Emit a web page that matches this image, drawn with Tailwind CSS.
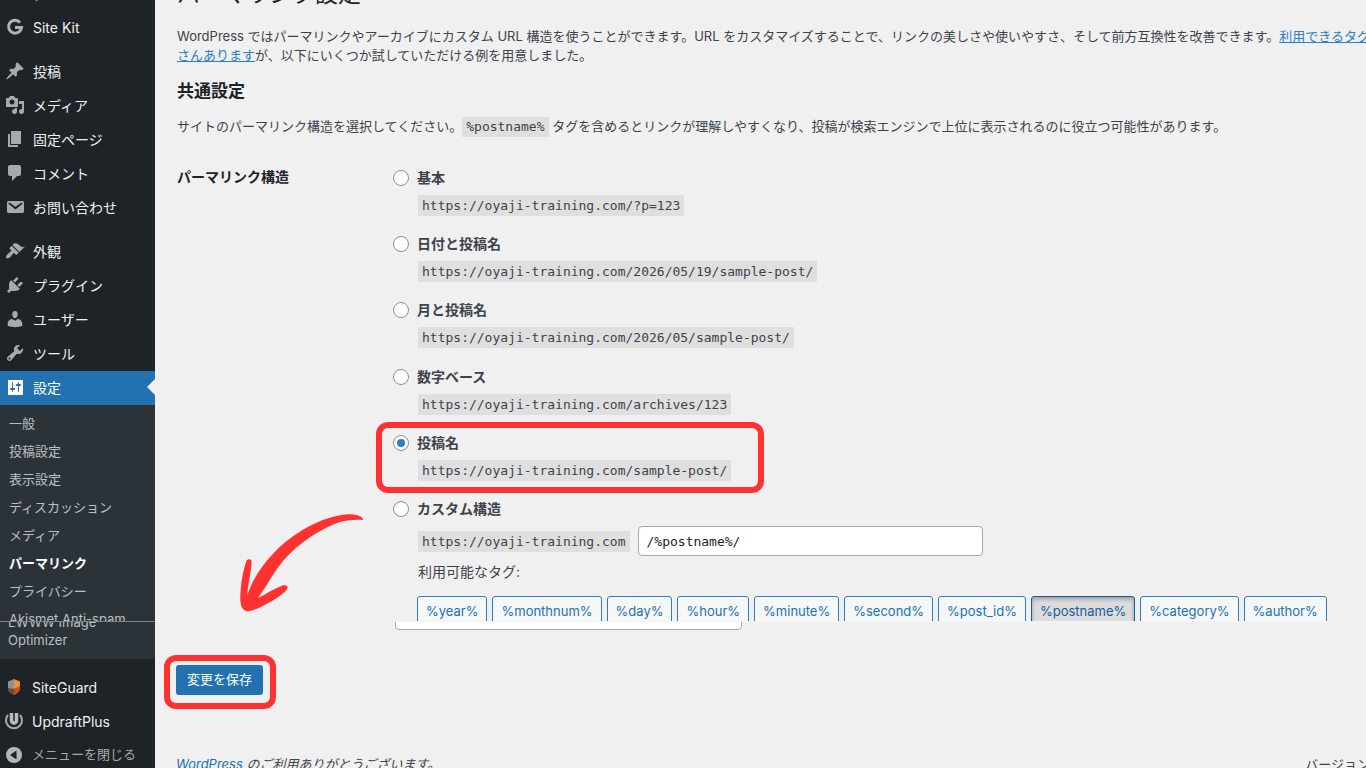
<!DOCTYPE html>
<html lang="ja">
<head>
<meta charset="utf-8">
<meta name="viewport" content="width=device-width, initial-scale=1">
<title>パーマリンク設定</title>
<script src="https://cdn.jsdelivr.net/npm/@tailwindcss/browser@4"></script>
</head>
<body class="flex h-screen flex-col overflow-hidden bg-[#f0f0f0] font-['Inter','Noto_Sans_CJK_JP',sans-serif] text-[13px] text-[#3c434a]">

<!-- Upper pane: menu and permalink options -->
<div class="relative flex min-h-0 flex-1 overflow-hidden">
  <nav class="w-[155px] shrink-0 overflow-hidden bg-[#1d2327] text-[14px] text-[#f0f0f1]" aria-label="メインメニュー">
    <ul class="-mt-[23px]">
      <li><a href="#" class="flex h-[34px] items-center gap-2 pb-[2px] pl-[5px]">
        <svg class="size-5 shrink-0 fill-[#a7aaad]" viewBox="0 0 20 20"><path d="M3.76 17h12.48A8 8 0 1 0 3.76 17zM10 4a1 1 0 1 1 0 2 1 1 0 0 1 0-2z"/></svg>ダッシュボード</a></li>
      <li><a href="#" class="flex h-[34px] items-center gap-2 pb-[2px] pl-[5px]">
        <svg class="size-5 shrink-0" viewBox="0 0 20 20" fill="none" stroke="#b0b3b6" stroke-width="3"><path d="M15 5.4A6.5 6.5 0 1 0 16.5 10.6H10"/></svg>Site Kit</a></li>
      <li class="mt-[10px]"><a href="#" class="flex h-[34px] items-center gap-2 pb-[2px] pl-[5px]">
        <svg class="size-5 shrink-0 fill-[#a7aaad]" viewBox="0 0 20 20"><path d="M10.44 3.02l1.82-1.82 6.36 6.35-1.83 1.82c-1.05-.68-2.48-.57-3.41.36l-.75.75c-.92.93-1.04 2.35-.35 3.41l-1.83 1.82-2.41-2.41-2.8 2.79c-.42.42-3.38 2.71-3.8 2.29s1.86-3.39 2.28-3.81l2.79-2.79L4.1 9.36l1.83-1.82c1.05.69 2.48.57 3.4-.36l.75-.75c.93-.92 1.05-2.35.36-3.41z"/></svg>投稿</a></li>
      <li><a href="#" class="flex h-[34px] items-center gap-2 pb-[2px] pl-[5px]">
        <svg class="size-5 shrink-0 fill-[#a7aaad]" viewBox="0 0 20 20"><path d="M13 11V4c0-.55-.45-1-1-1h-1.67L9 1H5L3.67 3H2c-.55 0-1 .45-1 1v7c0 .55.45 1 1 1h10c.55 0 1-.45 1-1zM7 4.5c1.38 0 2.5 1.12 2.5 2.5S8.38 9.5 7 9.5 4.5 8.38 4.5 7 5.62 4.5 7 4.5zM14 6h5v10.5c0 1.38-1.12 2.5-2.5 2.5S14 17.88 14 16.5s1.12-2.5 2.5-2.5c.17 0 .34.02.5.05V9h-3V6zm-4 8.05V13h2v3.5c0 1.38-1.12 2.5-2.5 2.5S7 17.88 7 16.5 8.12 14 9.5 14c.17 0 .34.02.5.05z"/></svg>メディア</a></li>
      <li><a href="#" class="flex h-[34px] items-center gap-2 pb-[2px] pl-[5px]">
        <svg class="size-5 shrink-0 fill-[#a7aaad]" viewBox="0 0 20 20"><path d="M6 15V2h10v13H6zm-1 1h8v2H3V5h2v11z"/></svg>固定ページ</a></li>
      <li><a href="#" class="flex h-[34px] items-center gap-2 pb-[2px] pl-[5px]">
        <svg class="size-5 shrink-0 fill-[#a7aaad]" viewBox="0 0 20 20"><path d="M5 2h9c1.1 0 2 .9 2 2v7c0 1.1-.9 2-2 2h-2l-5 5v-5H5c-1.1 0-2-.9-2-2V4c0-1.1.9-2 2-2z"/></svg>コメント</a></li>
      <li><a href="#" class="flex h-[34px] items-center gap-2 pb-[2px] pl-[5px]">
        <svg class="size-5 shrink-0 fill-[#a7aaad]" viewBox="0 0 20 20"><path d="M3.87 4h13.25C18.37 4 19 4.59 19 5.79v8.42c0 1.19-.63 1.79-1.88 1.79H3.87c-1.25 0-1.88-.6-1.88-1.79V5.79c0-1.2.63-1.79 1.88-1.79zm6.62 8.6l6.74-5.53c.24-.2.43-.66.13-1.07-.29-.41-.82-.42-1.17-.17l-5.7 3.86L4.8 5.83c-.35-.25-.88-.24-1.17.17-.3.41-.11.87.13 1.07z"/></svg>お問い合わせ</a></li>
      <li class="mt-[10px]"><a href="#" class="flex h-[34px] items-center gap-2 pb-[2px] pl-[5px]">
        <svg class="size-5 shrink-0 fill-[#a7aaad]" viewBox="0 0 20 20"><path d="M14.48 11.06L7.41 3.99l1.5-1.5c.5-.56 2.3-.47 3.51.32 1.21.8 1.43 1.28 2.91 2.1 1.18.64 2.45 1.26 4.45.85zm-.71.71L6.7 4.7 4.93 6.47c-.39.39-.39 1.02 0 1.41l1.06 1.06c.39.39.39 1.03 0 1.42-.6.6-1.43 1.11-2.21 1.69-.35.26-.7.53-1.01.84C1.43 14.23.4 16.08 1.4 17.07c.99 1 2.84-.03 4.18-1.36.31-.31.58-.66.85-1.02.57-.78 1.08-1.61 1.69-2.21.39-.39 1.02-.39 1.41 0l1.06 1.06c.39.39 1.02.39 1.41 0z"/></svg>外観</a></li>
      <li><a href="#" class="flex h-[34px] items-center gap-2 pb-[2px] pl-[5px]">
        <svg class="size-5 shrink-0 fill-[#a7aaad]" viewBox="0 0 20 20"><path d="M13.11 4.36L9.87 7.6 8 5.73l3.24-3.24c.35-.34 1.05-.2 1.56.32.52.51.66 1.21.31 1.55zm-8 1.77l.91-1.12 9.01 9.01-1.19.84c-.71.71-2.63 1.16-3.82 1.16H6.14L4.9 17.26c-.59.59-1.54.59-2.12 0-.59-.58-.59-1.53 0-2.12l1.24-1.24v-3.88c0-1.13.4-3.19 1.09-3.89zm7.26 3.97l3.24-3.24c.34-.35 1.04-.21 1.55.31.52.51.66 1.21.31 1.55l-3.24 3.25z"/></svg>プラグイン</a></li>
      <li><a href="#" class="flex h-[34px] items-center gap-2 pb-[2px] pl-[5px]">
        <svg class="size-5 shrink-0 fill-[#a7aaad]" viewBox="0 0 20 20"><path d="M10 9.25c-2.27 0-2.73-3.44-2.73-3.44C7 4.02 7.82 2 9.97 2c2.16 0 2.98 2.02 2.71 3.81 0 0-.41 3.44-2.68 3.44zm0 2.57L12.72 10c2.39 0 4.52 2.33 4.52 4.53v2.49s-3.65 1.13-7.24 1.13c-3.65 0-7.24-1.13-7.24-1.13v-2.49c0-2.25 1.94-4.48 4.47-4.48z"/></svg>ユーザー</a></li>
      <li><a href="#" class="flex h-[34px] items-center gap-2 pb-[2px] pl-[5px]">
        <svg class="size-5 shrink-0 fill-[#a7aaad]" viewBox="0 0 20 20"><path d="M16.68 9.77c-1.34 1.34-3.3 1.67-4.95.99l-5.41 6.52c-.99.99-2.59.99-3.58 0s-.99-2.59 0-3.57l6.52-5.42c-.68-1.65-.35-3.61.99-4.95 1.28-1.28 3.12-1.62 4.72-1.06l-2.89 2.89 2.82 2.82 2.86-2.87c.53 1.58.18 3.39-1.08 4.65zM3.81 16.21c.4.39 1.04.39 1.43 0 .4-.4.4-1.04 0-1.43-.39-.4-1.03-.4-1.43 0-.39.39-.39 1.03 0 1.43z"/></svg>ツール</a></li>
      <li>
        <a href="#" class="flex h-[34px] items-center gap-2 bg-[#2271b1] pb-[2px] pl-[5px] text-white">
          <svg class="size-5 shrink-0 fill-white" viewBox="0 0 20 20"><path d="M18 16V4c0-.55-.45-1-1-1H4c-.55 0-1 .45-1 1v13c0 .55.45 1 1 1h13c.55 0 1-.45 1-1v-1zM8 11h1c.55 0 1 .45 1 1s-.45 1-1 1H8v1.5c0 .28-.22.5-.5.5s-.5-.22-.5-.5V13H6c-.55 0-1-.45-1-1s.45-1 1-1h1V5.5c0-.28.22-.5.5-.5s.5.22.5.5V11zm5-2h-1c-.55 0-1-.45-1-1s.45-1 1-1h1V5.5c0-.28.22-.5.5-.5s.5.22.5.5V7h1c.55 0 1 .45 1 1s-.45 1-1 1h-1v5.5c0 .28-.22.5-.5.5s-.5-.22-.5-.5V9z"/></svg>
          <span class="flex-1">設定</span>
          <svg class="h-4 w-2 shrink-0 fill-[#f0f0f0]" viewBox="0 0 8 16"><path d="M8 0v16L0 8z"/></svg>
        </a>
        <ul class="bg-[#2c3338] pt-1 pl-[9px] text-[13px] leading-7 whitespace-nowrap text-[#bcc0c4]">
          <li><a href="#">一般</a></li>
          <li><a href="#">投稿設定</a></li>
          <li><a href="#">表示設定</a></li>
          <li><a href="#">ディスカッション</a></li>
          <li><a href="#">メディア</a></li>
          <li><a href="#" class="font-bold text-white">パーマリンク</a></li>
          <li><a href="#">プライバシー</a></li>
          <li><a href="#">Akismet Anti-spam</a></li>
        </ul>
      </li>
    </ul>
  </nav>

  <main class="min-w-0 flex-1 overflow-hidden pl-[22px]">
    <h1 class="-mt-[21px] text-[23px] leading-[30px] text-[#1d2327]">パーマリンク設定</h1>
    <p class="mt-[18px] leading-[19px] whitespace-nowrap">WordPress ではパーマリンクやアーカイブにカスタム URL 構造を使うことができます。URL をカスタマイズすることで、リンクの美しさや使いやすさ、そして前方互換性を改善できます。<a href="#" class="text-[#2c7fc4] underline">利用できるタグはたく<br>さんあります</a>が、以下にいくつか試していただける例を用意しました。</p>
    <h2 class="mt-[14px] text-[17px] leading-6 font-bold text-[#1d2327]">共通設定</h2>
    <p class="mt-[13px] leading-[20px] whitespace-nowrap">サイトのパーマリンク構造を選択してください。<code class="inline-block bg-[#dfdfe0] px-[4px] font-['DejaVu_Sans_Mono',monospace]">%postname%</code> タグを含めるとリンクが理解しやすくなり、投稿が検索エンジンで上位に表示されるのに役立つ可能性があります。</p>

    <div role="radiogroup" aria-labelledby="structure" class="mt-[31px] flex">
      <div id="structure" class="w-[216px] shrink-0 text-[14px] leading-[18px] font-bold text-[#1d2327]">パーマリンク構造</div>
      <div class="min-w-0 flex-1 whitespace-nowrap">
        <div class="flex h-[66px] items-start gap-2">
          <input type="radio" name="s" id="s1" class="mt-[2px] grid size-4 shrink-0 appearance-none place-items-center rounded-full border border-[#8c8f94] bg-white">
          <div><label for="s1" class="block text-[14px] leading-5 font-bold">基本</label>
          <code class="mt-[7px] ml-px block w-fit bg-[#dfdfe0] px-1 font-['DejaVu_Sans_Mono',monospace] leading-[21px]">https://oyaji-training.com/?p=123</code></div>
        </div>
        <div class="flex h-[66px] items-start gap-2">
          <input type="radio" name="s" id="s2" class="mt-[2px] grid size-4 shrink-0 appearance-none place-items-center rounded-full border border-[#8c8f94] bg-white">
          <div><label for="s2" class="block text-[14px] leading-5 font-bold">日付と投稿名</label>
          <code class="mt-[7px] ml-px block w-fit bg-[#dfdfe0] px-1 font-['DejaVu_Sans_Mono',monospace] leading-[21px]">https://oyaji-training.com/2026/05/19/sample-post/</code></div>
        </div>
        <div class="flex h-[67px] items-start gap-2">
          <input type="radio" name="s" id="s3" class="mt-[2px] grid size-4 shrink-0 appearance-none place-items-center rounded-full border border-[#8c8f94] bg-white">
          <div><label for="s3" class="block text-[14px] leading-5 font-bold">月と投稿名</label>
          <code class="mt-[7px] ml-px block w-fit bg-[#dfdfe0] px-1 font-['DejaVu_Sans_Mono',monospace] leading-[21px]">https://oyaji-training.com/2026/05/sample-post/</code></div>
        </div>
        <div class="flex h-[66px] items-start gap-2">
          <input type="radio" name="s" id="s4" class="mt-[2px] grid size-4 shrink-0 appearance-none place-items-center rounded-full border border-[#8c8f94] bg-white">
          <div><label for="s4" class="block text-[14px] leading-5 font-bold">数字ベース</label>
          <code class="mt-[7px] ml-px block w-fit bg-[#dfdfe0] px-1 font-['DejaVu_Sans_Mono',monospace] leading-[21px]">https://oyaji-training.com/archives/123</code></div>
        </div>
        <div class="relative flex h-[66px] items-start gap-2">
          <input type="radio" name="s" id="s5" checked class="mt-[2px] grid size-4 shrink-0 appearance-none place-items-center rounded-full border border-[#8c8f94] bg-white before:size-2 before:rounded-full before:bg-[#2c7fc4] before:content-['']">
          <div><label for="s5" class="block text-[14px] leading-5 font-bold">投稿名</label>
          <code class="mt-[7px] ml-px block w-fit bg-[#dfdfe0] px-1 font-['DejaVu_Sans_Mono',monospace] leading-[21px]">https://oyaji-training.com/sample-post/</code></div>
          <div class="pointer-events-none absolute -top-[11px] -left-[17px] h-[71px] w-[388px] rounded-xl border-6 border-[#ff3131]"></div>
        </div>
        <div class="flex items-start gap-2">
          <input type="radio" name="s" id="s6" class="mt-[2px] grid size-4 shrink-0 appearance-none place-items-center rounded-full border border-[#8c8f94] bg-white">
          <div class="min-w-0"><label for="s6" class="block text-[14px] leading-5 font-bold">カスタム構造</label>
            <div class="mt-[7px] ml-px flex items-center gap-2">
              <code class="bg-[#dfdfe0] px-1 font-['DejaVu_Sans_Mono',monospace] leading-[21px]">https://oyaji-training.com</code>
              <input type="text" aria-label="カスタム構造" value="/%postname%/" class="h-[30px] w-[345px] rounded-[4px] border border-[#a5a8ac] bg-white px-2 font-['DejaVu_Sans_Mono',monospace] text-[#1d2327]">
            </div>
            <p class="mt-[6px] ml-px text-[14px] leading-5">利用可能なタグ:</p>
            <div class="mt-[14px] flex gap-[5px] leading-[28px] text-[#2271b1]">
              <button type="button" class="h-[30px] rounded-[3px] border border-[#2c7fc4] bg-[#f6f7f7] px-2">%year%</button>
              <button type="button" class="h-[30px] rounded-[3px] border border-[#2c7fc4] bg-[#f6f7f7] px-2">%monthnum%</button>
              <button type="button" class="h-[30px] rounded-[3px] border border-[#2c7fc4] bg-[#f6f7f7] px-2">%day%</button>
              <button type="button" class="h-[30px] rounded-[3px] border border-[#2c7fc4] bg-[#f6f7f7] px-2">%hour%</button>
              <button type="button" class="h-[30px] rounded-[3px] border border-[#2c7fc4] bg-[#f6f7f7] px-2">%minute%</button>
              <button type="button" class="h-[30px] rounded-[3px] border border-[#2c7fc4] bg-[#f6f7f7] px-2">%second%</button>
              <button type="button" class="h-[30px] rounded-[3px] border border-[#2c7fc4] bg-[#f6f7f7] px-2">%post_id%</button>
              <button type="button" aria-pressed="true" class="h-[30px] rounded-[3px] border border-[#135e96] bg-[#dcdcde] px-2 text-[#135e96] inset-shadow-sm inset-shadow-black/30">%postname%</button>
              <button type="button" class="h-[30px] rounded-[3px] border border-[#2c7fc4] bg-[#f6f7f7] px-2">%category%</button>
              <button type="button" class="h-[30px] rounded-[3px] border border-[#2c7fc4] bg-[#f6f7f7] px-2">%author%</button>
            </div>
          </div>
        </div>
      </div>
    </div>
  </main>

  <!-- Hand-drawn arrow pointing at the save button -->
  <svg class="pointer-events-none absolute top-[500px] left-[220px] h-[120px] w-[150px]" viewBox="0 0 450 360" fill="#ff3131"><path d="M429 60C430 51 410 41 385 43C300 48 215 105 165 155C125 195 100 235 82 285C84 250 94 215 95 185C94 176 82 176 79 184C68 215 60 265 61 300C62 325 72 336 90 333C120 327 180 290 198 272C208 260 200 252 186 257C160 266 140 282 113 294C140 260 155 225 185 188C225 138 300 85 360 66C385 59 410 58 429 60Z"/></svg>
</div>

<!-- Lower pane: end of the page -->
<div class="flex h-[147px] shrink-0 overflow-hidden">
  <nav class="w-[155px] shrink-0 overflow-hidden bg-[#1d2327] text-[14px] text-[#f0f0f1]" aria-label="メニュー下部">
    <div class="overflow-hidden border-t border-[#7d8286] bg-[#2c3338] pb-[10px] pl-2 text-[13px] leading-[18px] text-[#bcc0c4]"><a href="#" class="-mt-[9px] block">EWWW Image<br>Optimizer</a></div>
    <ul class="mt-[11px]">
      <li><a href="#" class="flex h-[34px] items-center gap-2 pl-1">
        <svg class="size-5 shrink-0" viewBox="0 0 20 20"><path d="M10 2L4 4.500v7c0 3 2.500 5 6 6.500z" fill="#8d8f91"/><path d="M4 11l6 1v6c-3.500-1.500-6-3.500-6-6.500z" fill="#6b4a3a"/><path d="M10 2l6 2.500V10l-6 2z" fill="#e8953a"/><path d="M10 12l6-3v2.500c0 3-2.500 5-6 6.500z" fill="#c4521f"/></svg>SiteGuard</a></li>
      <li><a href="#" class="flex h-[34px] items-center gap-2 pl-1">
        <svg class="size-5 shrink-0" viewBox="0 0 20 20" fill="none"><path d="M4 4A8 8 0 1 0 16 4" stroke="#a7aaad" stroke-width="2"/><path d="M7.500 2v7.500a2.500 2.500 0 0 0 5 0V2" stroke="#b9bbbe" stroke-width="3.500"/></svg>UpdraftPlus</a></li>
      <li><button type="button" class="flex h-[34px] w-full items-center gap-2 pl-1 text-[13px] whitespace-nowrap text-[#a7aaad]">
        <svg class="size-5 shrink-0" viewBox="0 0 20 20"><circle cx="10" cy="10" r="8" fill="#b4b7ba"/><path d="M12.500 5.500v9L6 10z" fill="#1d2327"/></svg>メニューを閉じる</button></li>
    </ul>
  </nav>
  <div class="flex min-w-0 flex-1 flex-col overflow-hidden border-t border-[#f4f4f4] pl-[21px]">
    <input type="text" aria-label="タグベース" class="-mt-[23px] ml-[219px] h-[31px] w-[347px] shrink-0 rounded-[4px] border border-[#a5a8ac] bg-white px-2">
    <div class="relative mt-[35px] w-fit">
      <button type="submit" class="block h-[30px] rounded-[3px] bg-[#2271b1] px-[11px] text-white">変更を保存</button>
      <div class="pointer-events-none absolute -top-[10px] -right-[13px] -bottom-[14px] -left-[12px] rounded-xl border-6 border-[#ff3131]"></div>
    </div>
    <footer class="mt-[59px] flex justify-between leading-5 whitespace-nowrap">
      <p class="italic"><a href="#" class="text-[#2271b1]">WordPress</a> のご利用ありがとうございます。</p>
      <p class="-mr-1">バージョン</p>
    </footer>
  </div>
</div>
</body>
</html>
